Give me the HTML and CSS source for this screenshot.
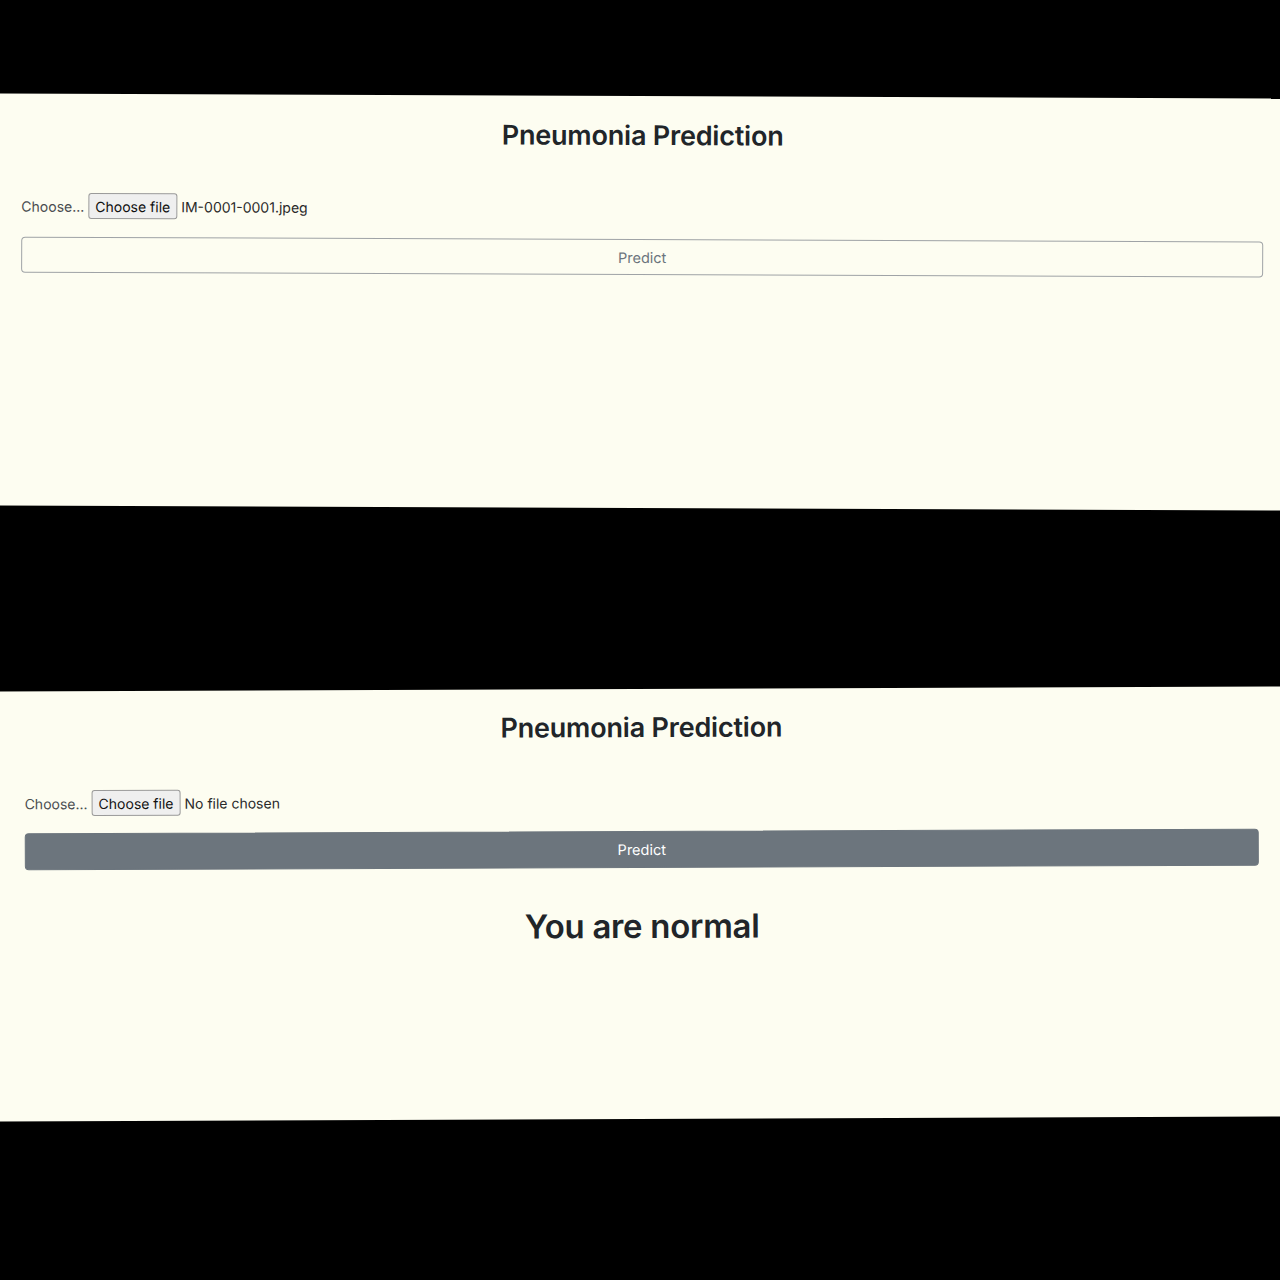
FILE: index.html
```html
<!DOCTYPE html>
<html lang="en">
<head>
<meta charset="utf-8">
<title>Pneumonia Prediction</title>
<link rel="stylesheet" href="styles.css">
</head>
<body>
<div class="stage">
  <section class="screen screen-one">
    <h3 class="title">Pneumonia Prediction</h3>
    <div class="file-row">
      <span class="file-label">Choose...</span>
      <span class="file-button">Choose file</span>
      <span class="file-name">IM-0001-0001.jpeg</span>
    </div>
    <button class="predict predict-outline" type="button">Predict</button>
  </section>

  <section class="screen screen-two">
    <h3 class="title">Pneumonia Prediction</h3>
    <div class="file-row">
      <span class="file-label">Choose...</span>
      <span class="file-button">Choose file</span>
      <span class="file-name">No file chosen</span>
    </div>
    <button class="predict predict-filled" type="button">Predict</button>
    <h2 class="result">You are normal</h2>
  </section>
</div>
</body>
</html>
```

FILE: styles.css
```css
* { box-sizing: border-box; }

html, body {
  margin: 0;
  padding: 0;
  background: #000;
}

body {
  font-family: Inter, "Liberation Sans", sans-serif;
  color: #212529;
}

.stage {
  width: 1280px;
  height: 1280px;
  padding-top: 96px;
  display: flex;
  flex-direction: column;
  overflow: hidden;
}

.screen {
  background: #fdfdf1;
  display: flex;
  flex-direction: column;
  width: 1292px;
  margin-left: -6px;
}

.screen-one {
  height: 412px;
  padding: 23px 23px 0 27px;
  transform: rotate(0.22deg);
}

.screen-two {
  height: 430px;
  margin-top: 181px;
  padding: 22px 27px 0 31px;
  transform: rotate(-0.22deg);
}

.title {
  margin: 0;
  text-align: center;
  font-size: 27px;
  line-height: 34px;
  font-weight: 600;
  letter-spacing: -0.2px;
  color: #212529;
}

.file-row {
  display: flex;
  align-items: center;
  gap: 4px;
  height: 26px;
  margin-top: 42px;
  font-size: 14px;
}

.screen-two .file-row { margin-top: 43px; }

.file-label {
  color: #4a4d50;
}

.file-button {
  display: inline-flex;
  align-items: center;
  height: 26px;
  padding: 0 6px;
  background: #efefef;
  border: 1px solid #9a9a9a;
  border-radius: 3px;
  color: #111;
  font-size: 14px;
}

.file-name {
  color: #2a2a2a;
}

.predict {
  display: block;
  width: 100%;
  height: 36px;
  margin-top: 18px;
  border-radius: 4px;
  font-family: Inter, "Liberation Sans", sans-serif;
  font-size: 14.5px;
  font-weight: 400;
}

.predict-outline {
  background: transparent;
  border: 1px solid #9fa3a6;
  color: #6c757d;
}

.predict-filled {
  background: #6c757d;
  border: 1px solid #6c757d;
  color: #fff;
  height: 37px;
  margin-top: 17px;
}

.result {
  margin: 38px 0 0;
  text-align: center;
  font-size: 33px;
  line-height: 40px;
  font-weight: 600;
  letter-spacing: -0.3px;
  color: #212529;
}
```
